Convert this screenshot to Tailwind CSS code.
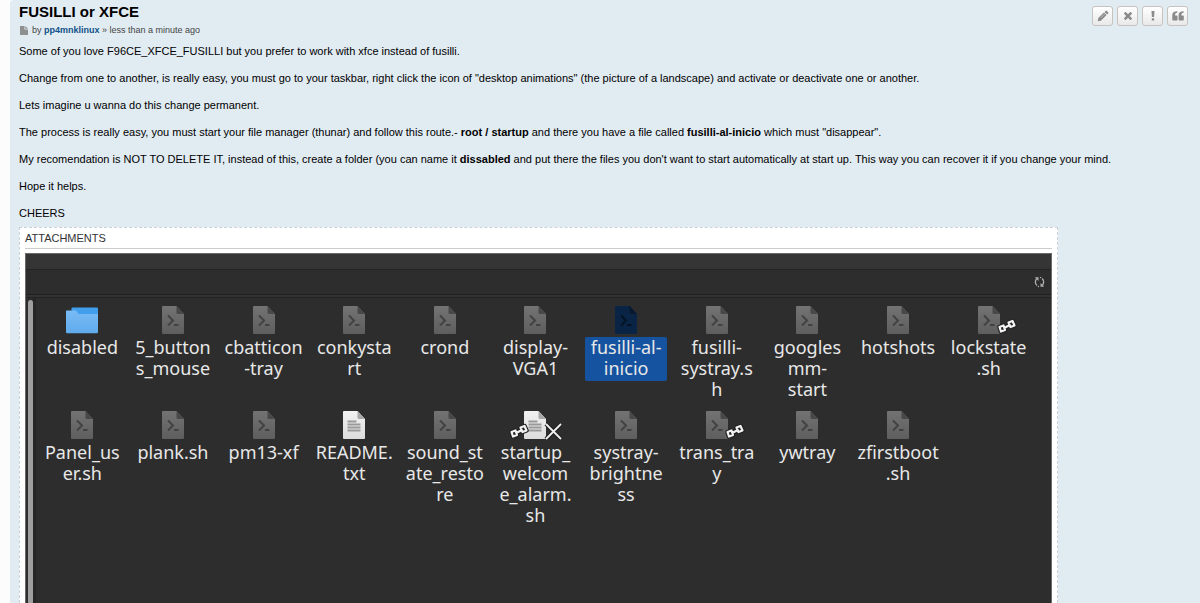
<!DOCTYPE html>
<html lang="en">
<head>
<meta charset="utf-8">
<meta name="viewport" content="width=device-width, initial-scale=1">
<title>FUSILLI or XFCE</title>
<script src="https://cdn.jsdelivr.net/npm/@tailwindcss/browser@4"></script>
</head>
<body class="h-screen overflow-hidden bg-[#fcfcfc] pl-[10px] font-['Liberation_Sans',Arial,sans-serif] text-[11px] text-black">

<svg width="0" height="0" class="absolute" aria-hidden="true">
  <defs>
    <linearGradient id="gs" x1="0" y1="0" x2="0" y2="1"><stop offset="0" stop-color="#737373"/><stop offset="1" stop-color="#5e5e5e"/></linearGradient>
    <linearGradient id="gt" x1="0" y1="0" x2="0" y2="1"><stop offset="0" stop-color="#f2f2f2"/><stop offset="1" stop-color="#dcdcdc"/></linearGradient>
    <linearGradient id="gf" x1="0" y1="0" x2="0" y2="1"><stop offset="0" stop-color="#79bbf5"/><stop offset="1" stop-color="#5fabec"/></linearGradient>
    <symbol id="script" viewBox="0 0 48 30">
      <path d="M14 1h13.500l7.500 8v19a1 1 0 0 1-1 1H14a1 1 0 0 1-1-1V2a1 1 0 0 1 1-1z" fill="url(#gs)"/>
      <path d="M27.500 1l7.500 8h-6a1.500 1.500 0 0 1-1.500-1.500z" fill="#484848"/>
      <path d="M19 10.500l5 5-5 5" fill="none" stroke="#424242" stroke-width="2"/><path d="M25 20h4.500" stroke="#424242" stroke-width="2"/>
    </symbol>
    <symbol id="script-sel" viewBox="0 0 48 30">
      <path d="M14 1h13.500l7.500 8v19a1 1 0 0 1-1 1H14a1 1 0 0 1-1-1V2a1 1 0 0 1 1-1z" fill="#0a2446"/>
      <path d="M27.500 1l7.500 8h-6a1.500 1.500 0 0 1-1.500-1.500z" fill="#07182f"/>
      <path d="M19 10.500l5 5-5 5" fill="none" stroke="#051325" stroke-width="2"/><path d="M25 20h4.500" stroke="#051325" stroke-width="2"/>
    </symbol>
    <symbol id="text" viewBox="0 0 48 30">
      <path d="M14 1h13.500l7.500 8v19a1 1 0 0 1-1 1H14a1 1 0 0 1-1-1V2a1 1 0 0 1 1-1z" fill="url(#gt)"/>
      <path d="M27.500 1l7.500 8h-6a1.500 1.500 0 0 1-1.500-1.500z" fill="#a8a8a8"/>
      <path d="M17.500 11.500h9M17.500 14.500h13M17.500 17.500h13M17.500 20.500h13" stroke="#9a9a9a" stroke-width="1.800"/>
    </symbol>
    <symbol id="folder" viewBox="0 0 48 30">
      <path d="M13.500 3.500a1 1 0 0 1 1-1H39a1 1 0 0 1 1 1V15H13.500z" fill="#429fee"/>
      <path d="M8.500 5.500H18l2.500 3.500H40v18a1.200 1.200 0 0 1-1.200 1.200H9.200A1.200 1.200 0 0 1 8 27V6a.5.5 0 0 1 .5-.5z" fill="url(#gf)"/>
    </symbol>
    <symbol id="chain" viewBox="0 0 20 16">
      <g fill="none" stroke="#222" stroke-width="4.500" stroke-linejoin="round"><path d="M2.500 9l4-1.500L8 12l-4 1.500zM11.500 4.500l4-1.500L17.500 7.500l-4 1.500zM8 9.500l4-2"/></g>
      <g fill="none" stroke="#f2f2f2" stroke-width="2.200" stroke-linejoin="round"><path d="M2.500 9l4-1.500L8 12l-4 1.500zM11.500 4.500l4-1.500L17.500 7.500l-4 1.500zM8 9.500l4-2"/></g>
    </symbol>
  </defs>
</svg>

<article class="flex h-full flex-col rounded-tl bg-[#e1ebf2] pl-[9px] pr-3">
  <header class="flex shrink-0 justify-between">
    <div>
      <h1 class="mt-[2px] text-[15px] leading-[20px] font-bold">FUSILLI or XFCE</h1>
      <p class="mt-[1px] flex items-center text-[9px] leading-[14px] text-[#444]">
        <svg class="mr-[4px] ml-[1px]" width="8" height="9" viewBox="0 0 8 9" aria-hidden="true"><path d="M0 0h4.500v3.500H8V9H0z" fill="#8f8f8f"/><path d="M5.300 0L8 2.700H5.300z" fill="#8f8f8f"/></svg>
        <span>by <a href="#" class="font-bold text-[#105289]">pp4mnklinux</a> » less than a minute ago</span>
      </p>
    </div>
    <div class="mt-[6px] flex h-5 gap-1">
      <button type="button" aria-label="Edit post" class="flex h-5 w-[21px] items-center justify-center rounded-[3px] border border-[#c7c3bf] bg-linear-to-b from-white to-[#e9e9e9]">
        <svg width="12" height="12" viewBox="0 0 12 12"><g fill="#8a8a8a"><path d="M8.500.9a1 1 0 0 1 1.300 0l1.400 1.400a1 1 0 0 1 0 1.300l-1 1L7.500 1.900z"/><path d="M6.900 2.400l2.700 2.700-5.700 5.700L.8 11.300l.5-3.200z"/></g><path d="M3.500 8L7.300 4.200" stroke="#ddd" stroke-width=".6"/></svg>
      </button>
      <button type="button" aria-label="Delete post" class="flex h-5 w-[21px] items-center justify-center rounded-[3px] border border-[#c7c3bf] bg-linear-to-b from-white to-[#e9e9e9]">
        <svg width="10" height="10" viewBox="0 0 10 10"><path d="M1.700 1.700l6.600 6.600M8.300 1.700l-6.600 6.600" stroke="#8a8a8a" stroke-width="2.600"/></svg>
      </button>
      <button type="button" aria-label="Report post" class="flex h-5 w-[21px] items-center justify-center rounded-[3px] border border-[#c7c3bf] bg-linear-to-b from-white to-[#e9e9e9]">
        <svg width="10" height="12" viewBox="0 0 10 12"><path d="M3.500 1h3L6.100 7H3.900zM3.800 8.200h2.400v2.200H3.800z" fill="#8a8a8a"/></svg>
      </button>
      <button type="button" aria-label="Reply with quote" class="flex h-5 w-[21px] items-center justify-center rounded-[3px] border border-[#c7c3bf] bg-linear-to-b from-white to-[#e9e9e9]">
        <svg width="12" height="12" viewBox="0 0 12 12"><path d="M5.300 1.200v1.600c-1.500 0-2.200.8-2.200 2.300v.4h1.400c.6 0 1 .4 1 1v3c0 .6-.4 1-1 1H1.300c-.6 0-1-.4-1-1V5c0-2.500 1.600-3.800 5-3.800zM11.600 1.200v1.600c-1.500 0-2.200.8-2.200 2.300v.4h1.400c.6 0 1 .4 1 1v3c0 .6-.4 1-1 1H7.600c-.6 0-1-.4-1-1V5c0-2.500 1.600-3.800 5-3.800z" fill="#8a8a8a"/></svg>
      </button>
    </div>
  </header>

  <div class="mt-[1px] shrink-0 leading-[27px]">
    <p>Some of you love F96CE_XFCE_FUSILLI but you prefer to work with xfce instead of fusilli.</p>
    <p>Change from one to another, is really easy, you must go to your taskbar, right click the icon of "desktop animations" (the picture of a landscape) and activate or deactivate one or another.</p>
    <p>Lets imagine u wanna do this change permanent.</p>
    <p>The process is really easy, you must start your file manager (thunar) and follow this route.- <strong>root / startup</strong> and there you have a file called <strong>fusilli-al-inicio</strong> which must "disappear".</p>
    <p>My recomendation is NOT TO DELETE IT, instead of this, create a folder (you can name it <strong>dissabled</strong> and put there the files you don't want to start automatically at start up. This way you can recover it if you change your mind.</p>
    <p>Hope it helps.</p>
    <p>CHEERS</p>
  </div>

  <section class="flex w-full max-w-[1039px] grow flex-col border border-b-0 border-dashed border-[#c9d2d8] bg-white px-[5px]">
    <h2 class="mb-1 border-b border-[#cccccc] leading-[20px] text-[#333]">ATTACHMENTS</h2>
    <div class="flex grow flex-col border border-b-0 border-[#6a6a6a] bg-[#2d2d2d] font-['Noto_Sans',sans-serif] text-[18px] text-[#e8e8e8]">
      <div class="h-4 shrink-0 border-b border-[#242424] bg-[#353535]"></div>
      <div class="flex h-[25px] shrink-0 items-center justify-end border-b border-[#202020] pr-[6px]">
        <svg width="11" height="12" viewBox="0 0 11 12" role="img" aria-label="Reload"><path d="M3 9.500C.9 8 .9 4.500 2.600 2.800M8 2.500c2.100 1.500 2.100 5 .4 6.700" fill="none" stroke="#b0b0b0" stroke-width="1.300"/><path d="M.8 1.300h3.700V5zM10.200 10.700H6.500V7z" fill="#b0b0b0"/><path d="M6 1.400l1.200.4M5 10.600l-1.200-.4" stroke="#b0b0b0" stroke-width="1.200"/></svg>
      </div>
      <div class="h-[3px] shrink-0 border-b border-[#222] bg-[#333]"></div>
      <div class="flex grow">
        <div class="mt-[2px] ml-[2px] w-[5px] rounded-t-[3px] bg-[#9f9f9f]"></div>
        <div class="w-[3px] bg-[#262626]"></div>
        <ul class="mt-[7px] mr-[17px] ml-px grid grow auto-rows-max grid-cols-11 content-start gap-y-2 text-center leading-[21px] whitespace-nowrap">
          <li class="flex flex-col items-center"><svg width="48" height="30"><use href="#folder"/></svg><span class="mt-[2px] pb-[2px]">disabled</span></li>
          <li class="flex flex-col items-center"><svg width="48" height="30"><use href="#script"/></svg><span class="mt-[2px] pb-[2px]">5_button<br>s_mouse</span></li>
          <li class="flex flex-col items-center"><svg width="48" height="30"><use href="#script"/></svg><span class="mt-[2px] pb-[2px]">cbatticon<br>-tray</span></li>
          <li class="flex flex-col items-center"><svg width="48" height="30"><use href="#script"/></svg><span class="mt-[2px] pb-[2px]">conkysta<br>rt</span></li>
          <li class="flex flex-col items-center"><svg width="48" height="30"><use href="#script"/></svg><span class="mt-[2px] pb-[2px]">crond</span></li>
          <li class="flex flex-col items-center"><svg width="48" height="30"><use href="#script"/></svg><span class="mt-[2px] pb-[2px]">display-<br>VGA1</span></li>
          <li class="flex flex-col items-center"><svg width="48" height="30"><use href="#script-sel"/></svg><span class="mt-[2px] w-[82px] rounded-[2px] bg-[#1553a0] pb-[2px]">fusilli-al-<br>inicio</span></li>
          <li class="flex flex-col items-center"><svg width="48" height="30"><use href="#script"/></svg><span class="mt-[2px] pb-[2px]">fusilli-<br>systray.s<br>h</span></li>
          <li class="flex flex-col items-center"><svg width="48" height="30"><use href="#script"/></svg><span class="mt-[2px] pb-[2px]">googles<br>mm-<br>start</span></li>
          <li class="flex flex-col items-center"><svg width="48" height="30"><use href="#script"/></svg><span class="mt-[2px] pb-[2px]">hotshots</span></li>
          <li class="flex flex-col items-center"><svg width="48" height="30" class="overflow-visible"><use href="#script"/><use href="#chain" x="32" y="13" width="20" height="16"/></svg><span class="mt-[2px] pb-[2px]">lockstate<br>.sh</span></li>

          <li class="flex flex-col items-center"><svg width="48" height="30"><use href="#script"/></svg><span class="mt-[2px] pb-[2px]">Panel_us<br>er.sh</span></li>
          <li class="flex flex-col items-center"><svg width="48" height="30"><use href="#script"/></svg><span class="mt-[2px] pb-[2px]">plank.sh</span></li>
          <li class="flex flex-col items-center"><svg width="48" height="30"><use href="#script"/></svg><span class="mt-[2px] pb-[2px]">pm13-xf</span></li>
          <li class="flex flex-col items-center"><svg width="48" height="30"><use href="#text"/></svg><span class="mt-[2px] pb-[2px]">README.<br>txt</span></li>
          <li class="flex flex-col items-center"><svg width="48" height="30"><use href="#script"/></svg><span class="mt-[2px] pb-[2px]">sound_st<br>ate_resto<br>re</span></li>
          <li class="flex flex-col items-center"><svg width="48" height="30" class="overflow-visible"><use href="#text"/><use href="#chain" x="-2" y="13" width="20" height="16"/><path d="M35 14l15 15M50 14L35 29" stroke="#222" stroke-width="4"/><path d="M35 14l15 15M50 14L35 29" stroke="#f0f0f0" stroke-width="1.800"/></svg><span class="mt-[2px] pb-[2px]">startup_<br>welcom<br>e_alarm.<br>sh</span></li>
          <li class="flex flex-col items-center"><svg width="48" height="30"><use href="#script"/></svg><span class="mt-[2px] pb-[2px]">systray-<br>brightne<br>ss</span></li>
          <li class="flex flex-col items-center"><svg width="48" height="30" class="overflow-visible"><use href="#script"/><use href="#chain" x="32" y="13" width="20" height="16"/></svg><span class="mt-[2px] pb-[2px]">trans_tra<br>y</span></li>
          <li class="flex flex-col items-center"><svg width="48" height="30"><use href="#script"/></svg><span class="mt-[2px] pb-[2px]">ywtray</span></li>
          <li class="flex flex-col items-center"><svg width="48" height="30"><use href="#script"/></svg><span class="mt-[2px] pb-[2px]">zfirstboot<br>.sh</span></li>
        </ul>
      </div>
    </div>
  </section>
</article>
</body>
</html>
